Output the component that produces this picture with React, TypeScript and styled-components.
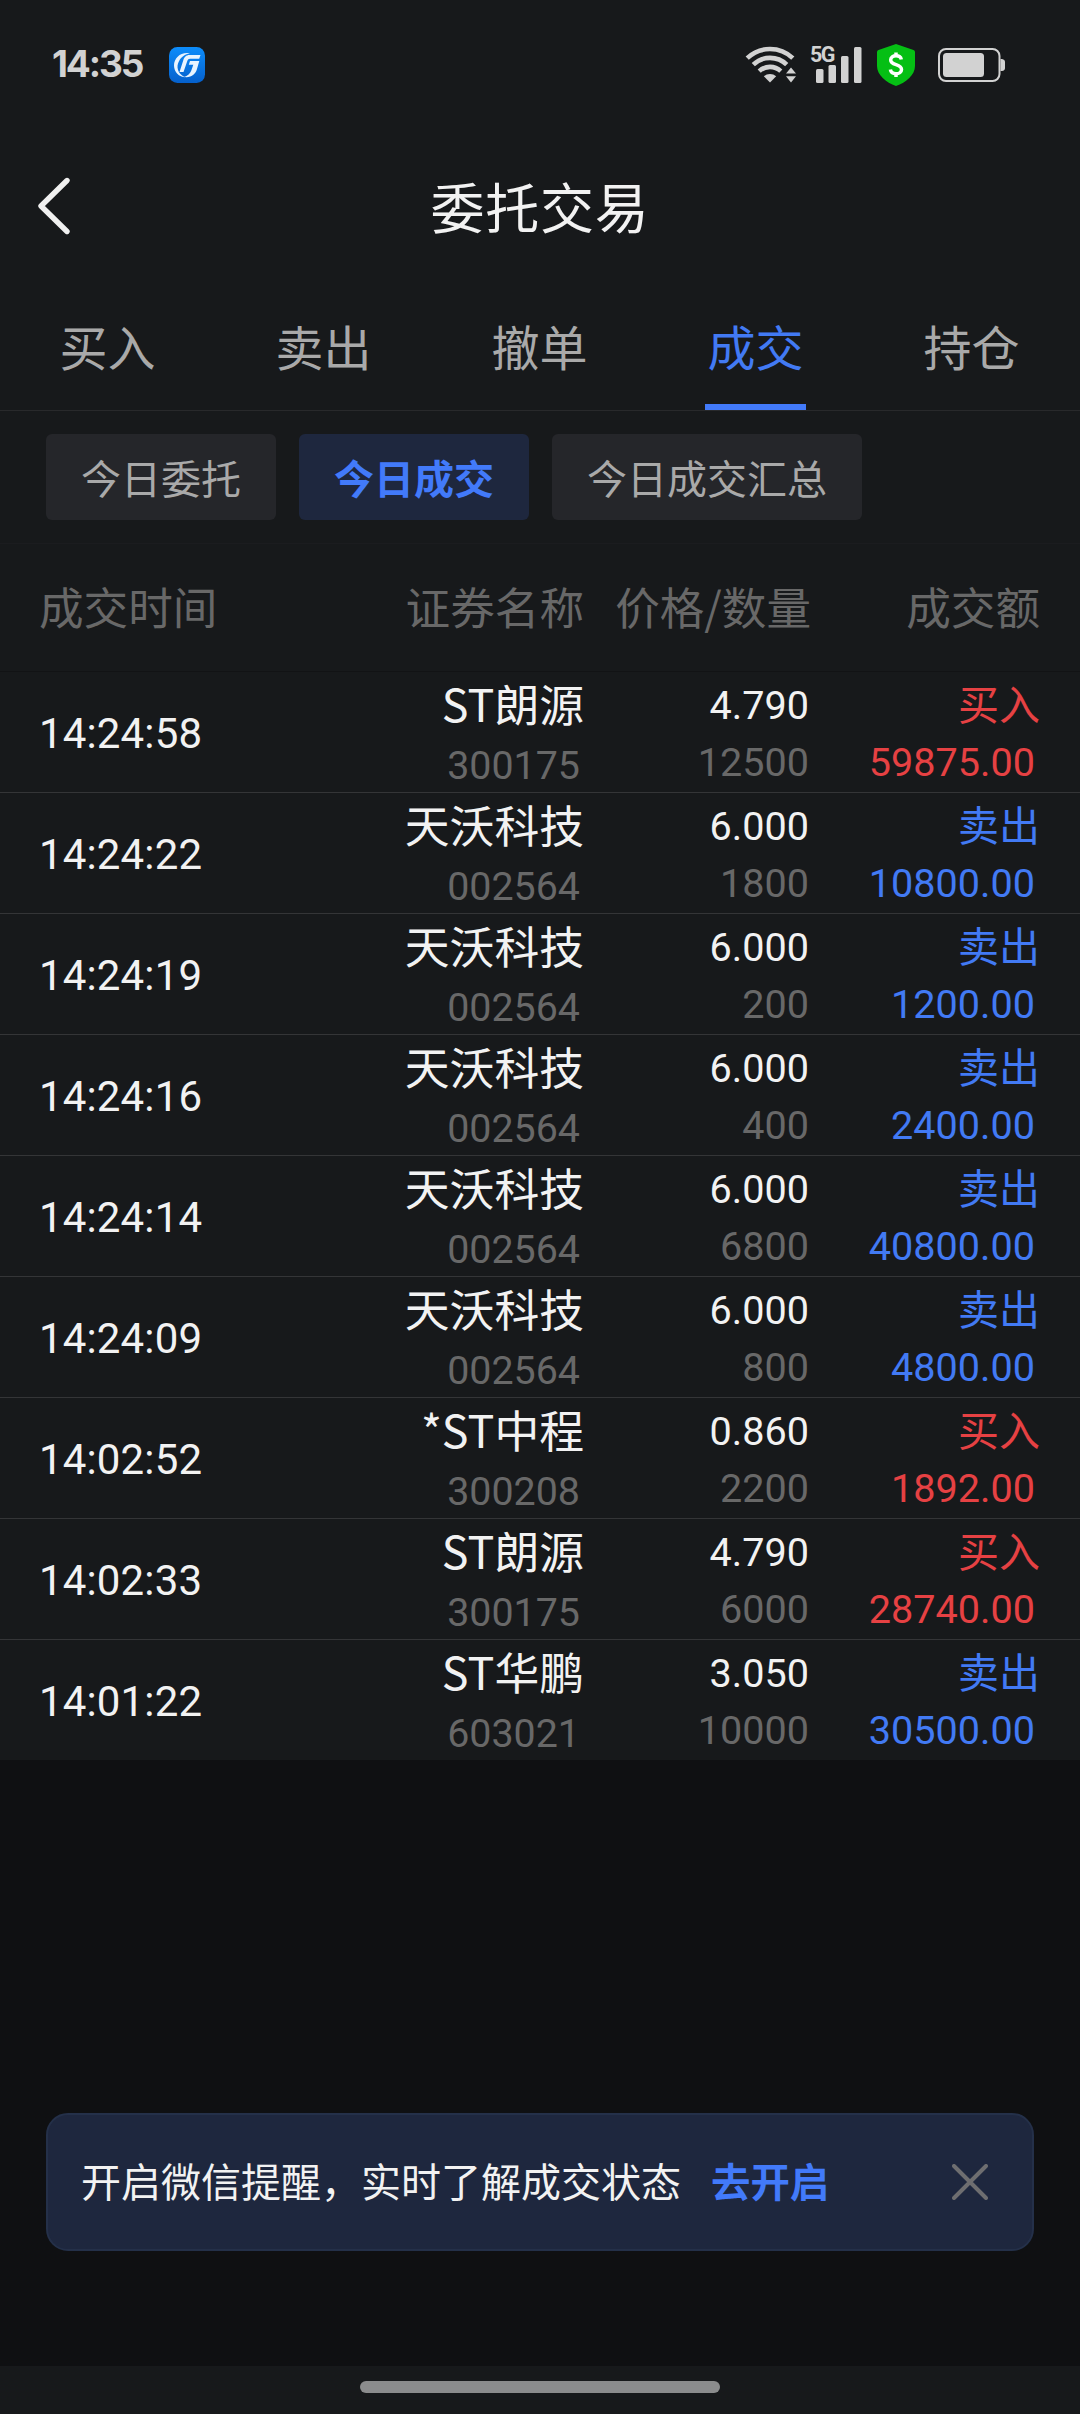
import React from "react";
import styled, { createGlobalStyle } from "styled-components";

const cjk = `"Noto Sans CJK SC", "Noto Sans", sans-serif`;
const num = `Roboto, "Noto Sans CJK SC", sans-serif`;

const color = {
  panel: "#17191b",
  base: "#0f1012",
  text: "#f2f2f2",
  tab: "#a9a9a9",
  muted: "#686868",
  blue: "#427afa",
  blueText: "#427af4",
  redText: "#e64143",
  chip: "#25262a",
  navy: "#1e273e",
};

const GlobalStyle = createGlobalStyle`
  * { box-sizing: border-box; }
  body { margin: 0; background: ${color.base}; }
`;

const Screen = styled.div`
  display: flex;
  flex-direction: column;
  width: 1080px;
  height: 2414px;
  background: ${color.base};
  color: ${color.text};
  font-family: ${cjk};
  white-space: nowrap;
  overflow: hidden;
`;

const StatusBar = styled.header`
  display: flex;
  align-items: center;
  height: 130px;
  padding: 0 74px 0 52px;
  background: ${color.panel};
`;

const Clock = styled.span`
  width: 117px;
  padding-bottom: 2px;
  font: 700 37px/44px Inter, sans-serif;
  letter-spacing: -2.1px;
  color: #d2d2d2;
`;

const StatusIcons = styled.div`
  display: flex;
  align-items: center;
  margin-left: auto;
  padding-bottom: 1px;
`;

const TitleBar = styled.div`
  display: grid;
  grid-template-columns: 140px 1fr 140px;
  align-items: center;
  height: 154px;
  padding-bottom: 3px;
  background: ${color.panel};
`;

const BackButton = styled.button`
  display: flex;
  padding: 0 0 0 34px;
  border: 0;
  background: none;
`;

const Title = styled.h1`
  margin: 0;
  text-align: center;
  font-size: 54px;
  font-weight: 400;
  line-height: 80px;
  letter-spacing: 0.8px;
`;

const Tabs = styled.nav`
  display: grid;
  grid-template-columns: repeat(5, 1fr);
  height: 127px;
  border-bottom: 1px solid #28292b;
  background: ${color.panel};
`;

const Tab = styled.a<{ $active?: boolean }>`
  width: 101px;
  padding-top: 25px;
  margin-left: 57px;
  text-align: center;
  font-size: 48px;
  line-height: 72px;
  color: ${(p) => (p.$active ? color.blueText : color.tab)};
  border-bottom: 6px solid ${(p) => (p.$active ? color.blue : "transparent")};
`;

const Chips = styled.div`
  display: flex;
  gap: 23px;
  height: 133px;
  padding: 23px 46px;
  border-bottom: 1px solid #1b1c1f;
  background: ${color.panel};
`;

const Chip = styled.button<{ $active?: boolean }>`
  height: 86px;
  padding: 0 35px;
  border: 0;
  border-radius: 6px;
  font-family: ${cjk};
  font-size: 40px;
  line-height: 86px;
  font-weight: ${(p) => (p.$active ? 700 : 400)};
  color: ${(p) => (p.$active ? color.blue : color.tab)};
  background: ${(p) => (p.$active ? color.navy : color.chip)};
`;

const columns = "301px 244px 227px 229px";

const TableHead = styled.div`
  display: grid;
  grid-template-columns: ${columns};
  align-items: center;
  height: 128px;
  padding: 0 40px 3px 39px;
  border-bottom: 1px solid #121315;
  background: ${color.panel};
  font-size: 44.6px;
  color: ${color.muted};
`;

const HeadCell = styled.span<{ $left?: boolean }>`
  text-align: ${(p) => (p.$left ? "left" : "right")};
  line-height: 66px;
`;

const Row = styled.div`
  display: grid;
  grid-template-columns: ${columns};
  align-items: start;
  height: 121px;
  padding: 0 40px 0 39px;
  background: ${color.panel};
  border-bottom: 1px solid #343537;
  &:last-child {
    height: 120px;
    border-bottom: 0;
  }
`;

const Time = styled.span`
  padding-top: 37px;
  font: 400 42px/50px ${num};
  letter-spacing: 0.15px;
`;

const Cell = styled.div<{ $top: number; $gap: number }>`
  display: flex;
  flex-direction: column;
  align-items: flex-end;
  gap: ${(p) => p.$gap}px;
  padding-top: ${(p) => p.$top}px;
`;

const Name = styled.span`
  font-size: 44.8px;
  line-height: 56px;
`;

const Figure = styled.span<{ $tone?: string; $inset?: number; $size?: number }>`
  padding-right: ${(p) => p.$inset ?? 0}px;
  font: 400 ${(p) => p.$size ?? 40}px/48px ${num};
  color: ${(p) => p.$tone ?? color.text};
`;

const Side = styled.span<{ $tone: string }>`
  font-size: 41px;
  line-height: 48px;
  color: ${(p) => p.$tone};
`;

const Footer = styled.div`
  display: flex;
  flex: 1;
  flex-direction: column;
  justify-content: flex-end;
`;

const Banner = styled.aside`
  display: flex;
  align-items: center;
  height: 138px;
  margin: 0 46px 115px;
  padding: 0 44px 0 33px;
  border: 2px solid #243049;
  border-radius: 22px;
  background: ${color.navy};
  font-size: 40px;
  line-height: 60px;
`;

const BannerText = styled.span`
  padding-bottom: 4px;
`;

const BannerLink = styled.a`
  margin-left: 30px;
  padding-bottom: 4px;
  font-size: 39.4px;
  font-weight: 700;
  color: ${color.blue};
`;

const CloseButton = styled.button`
  display: flex;
  margin-left: auto;
  padding: 0;
  border: 0;
  background: none;
`;

const GestureBar = styled.div`
  display: flex;
  justify-content: center;
  height: 48px;
  padding-top: 15px;
  background: ${color.panel};
`;

const Pill = styled.div`
  width: 360px;
  height: 12px;
  border-radius: 6px;
  background: #8b8c8d;
`;

const Icon = styled.svg<{ $ml?: number }>`
  display: block;
  flex: none;
  margin-left: ${(p) => p.$ml ?? 0}px;
`;

const SignalBox = styled.div`
  display: grid;
  margin-left: 12px;
  & > * { grid-area: 1 / 1; }
`;

const NetworkLabel = styled.span`
  justify-self: start;
  align-self: start;
  height: 22px;
  margin: -2px 0 0 1px;
  font: 700 21.5px/22px Roboto, sans-serif;
  letter-spacing: -1.6px;
  color: #d2d2d2;
`;

type Trade = {
  time: string;
  name: string;
  code: string;
  price: string;
  qty: string;
  side: "买入" | "卖出";
  amount: string;
};

const trades: Trade[] = [
  { time: "14:24:58", name: "ST朗源", code: "300175", price: "4.790", qty: "12500", side: "买入", amount: "59875.00" },
  { time: "14:24:22", name: "天沃科技", code: "002564", price: "6.000", qty: "1800", side: "卖出", amount: "10800.00" },
  { time: "14:24:19", name: "天沃科技", code: "002564", price: "6.000", qty: "200", side: "卖出", amount: "1200.00" },
  { time: "14:24:16", name: "天沃科技", code: "002564", price: "6.000", qty: "400", side: "卖出", amount: "2400.00" },
  { time: "14:24:14", name: "天沃科技", code: "002564", price: "6.000", qty: "6800", side: "卖出", amount: "40800.00" },
  { time: "14:24:09", name: "天沃科技", code: "002564", price: "6.000", qty: "800", side: "卖出", amount: "4800.00" },
  { time: "14:02:52", name: "*ST中程", code: "300208", price: "0.860", qty: "2200", side: "买入", amount: "1892.00" },
  { time: "14:02:33", name: "ST朗源", code: "300175", price: "4.790", qty: "6000", side: "买入", amount: "28740.00" },
  { time: "14:01:22", name: "ST华鹏", code: "603021", price: "3.050", qty: "10000", side: "卖出", amount: "30500.00" },
];

const BrokerLogo = () => (
  <Icon width="36" height="36" viewBox="0 0 36 36">
    <defs>
      <linearGradient id="broker" x1="0" y1="0" x2="0" y2="1">
        <stop offset="0" stopColor="#0d8dfb" />
        <stop offset="1" stopColor="#0560cc" />
      </linearGradient>
    </defs>
    <rect width="36" height="36" rx="8.5" fill="url(#broker)" />
    <path d="M21 6.200C12 4.500 5 10.500 5 18.500C5 25 10 30 16.500 30.300C10 27.500 7.300 22 9 16.500C11 10.500 15 7.500 21 6.200Z" fill="#e8f4ff" />
    <path d="M31.500 8H20.500C17 8 15.300 10.200 14.300 13.200L10.500 25H14.500L18.300 14C18.800 12.400 19.600 11.700 21 11.700H30.200Z" fill="#e8f4ff" />
    <path d="M30.300 14H21L19.800 17.800H24.300L22.400 23.200C21.300 26.500 18.500 29 15 30C22.500 31 26.500 27 28 22L29.200 17.800Z" fill="#e8f4ff" />
  </Icon>
);

const Wifi = () => (
  <Icon width="52" height="38" viewBox="0 0 52 38" fill="none" stroke="#d2d2d2" strokeWidth="4.6">
    <path d="M2.200 12.200A33 33 0 0 1 47.800 12.200" />
    <path d="M8.300 18.600A24 24 0 0 1 41.700 18.600" />
    <path d="M14.200 25.100A16 16 0 0 1 35.800 25.100" />
    <path d="M25 36.500L18.800 30.200A9.500 9.500 0 0 1 31.200 30.200Z" fill="#d2d2d2" stroke="none" />
    <path d="M46 21.500L51 27.600H41ZM46 36.500L51 30.200H41Z" fill="#d2d2d2" stroke="none" />
  </Icon>
);

const Signal = () => (
  <SignalBox>
    <Icon width="55" height="38" viewBox="-1 0 55 38" fill="#d2d2d2">
      <rect x="6" y="23" width="7.500" height="14" rx="1.500" />
      <rect x="18.500" y="19" width="7.500" height="18" rx="1.500" />
      <rect x="31" y="10" width="7.500" height="27" rx="1.500" />
      <rect x="44" y="1" width="7.500" height="36" rx="1.500" />
    </Icon>
    <NetworkLabel>5G</NetworkLabel>
  </SignalBox>
);

const Shield = () => (
  <Icon $ml={13} width="38" height="42" viewBox="0 0 38 42">
    <path d="M19 0L36.500 6Q38 6.500 38 8V22C38 31 29 38.500 19 42C9 38.500 0 31 0 22V8Q0 6.500 1.500 6Z" fill="#05bf14" />
    <path d="M24.300 15.500C23.800 13 21.800 11.800 19 11.800C16 11.800 13.700 13.400 13.700 16C13.700 22 24.500 19.300 24.500 25.500C24.500 28.300 22 29.800 19 29.800C16 29.800 13.800 28.400 13.400 25.600M19 8.500V12M19 29.500V33" fill="none" stroke="#fff" strokeWidth="3.500" />
  </Icon>
);

const Battery = () => (
  <Icon $ml={23} width="68" height="34" viewBox="0 0 68 34">
    <rect x="1" y="1" width="60.500" height="32" rx="7" fill="none" stroke="#d2d2d2" strokeWidth="2" />
    <rect x="5" y="5" width="41" height="24" rx="3.500" fill="#d2d2d2" />
    <path d="M62.500 11H64Q67 11.500 67 14V20Q67 22.500 64 23H62.500Z" fill="#d2d2d2" />
  </Icon>
);

export default function App() {
  return (
    <Screen>
      <GlobalStyle />
      <StatusBar>
        <Clock>14:35</Clock>
        <BrokerLogo />
        <StatusIcons>
          <Wifi />
          <Signal />
          <Shield />
          <Battery />
        </StatusIcons>
      </StatusBar>

      <TitleBar>
        <BackButton aria-label="返回">
          <Icon width="40" height="60" viewBox="0 0 40 60">
            <path d="M33 4.500L7 30L33 55.500" fill="none" stroke="#f0f0f0" strokeWidth="5.400" strokeLinecap="round" strokeLinejoin="round" />
          </Icon>
        </BackButton>
        <Title>委托交易</Title>
      </TitleBar>

      <Tabs>
        {["买入", "卖出", "撤单", "成交", "持仓"].map((t) => (
          <Tab key={t} $active={t === "成交"}>{t}</Tab>
        ))}
      </Tabs>

      <Chips>
        {["今日委托", "今日成交", "今日成交汇总"].map((t) => (
          <Chip key={t} $active={t === "今日成交"}>{t}</Chip>
        ))}
      </Chips>

      <TableHead>
        <HeadCell $left>成交时间</HeadCell>
        <HeadCell>证券名称</HeadCell>
        <HeadCell>价格/数量</HeadCell>
        <HeadCell>成交额</HeadCell>
      </TableHead>

      <div>
        {trades.map((t) => {
          const tone = t.side === "买入" ? color.redText : color.blueText;
          return (
            <Row key={t.time}>
              <Time>{t.time}</Time>
              <Cell $top={3} $gap={11}>
                <Name>{t.name}</Name>
                <Figure $tone={color.muted} $inset={4} $size={39.4}>{t.code}</Figure>
              </Cell>
              <Cell $top={10} $gap={9}>
                <Figure $inset={2} $size={39.6}>{t.price}</Figure>
                <Figure $inset={2} $size={39.6} $tone={color.muted}>{t.qty}</Figure>
              </Cell>
              <Cell $top={6} $gap={13}>
                <Side $tone={tone}>{t.side}</Side>
                <Figure $inset={5} $size={39.6} $tone={tone}>{t.amount}</Figure>
              </Cell>
            </Row>
          );
        })}
      </div>

      <Footer>
        <Banner>
          <BannerText>开启微信提醒，实时了解成交状态</BannerText>
          <BannerLink>去开启</BannerLink>
          <CloseButton aria-label="关闭">
            <Icon width="36" height="36" viewBox="0 0 36 36">
              <path d="M2 2L34 34M34 2L2 34" fill="none" stroke="#6e6e70" strokeWidth="4" strokeLinecap="round" />
            </Icon>
          </CloseButton>
        </Banner>
        <GestureBar>
          <Pill />
        </GestureBar>
      </Footer>
    </Screen>
  );
}
